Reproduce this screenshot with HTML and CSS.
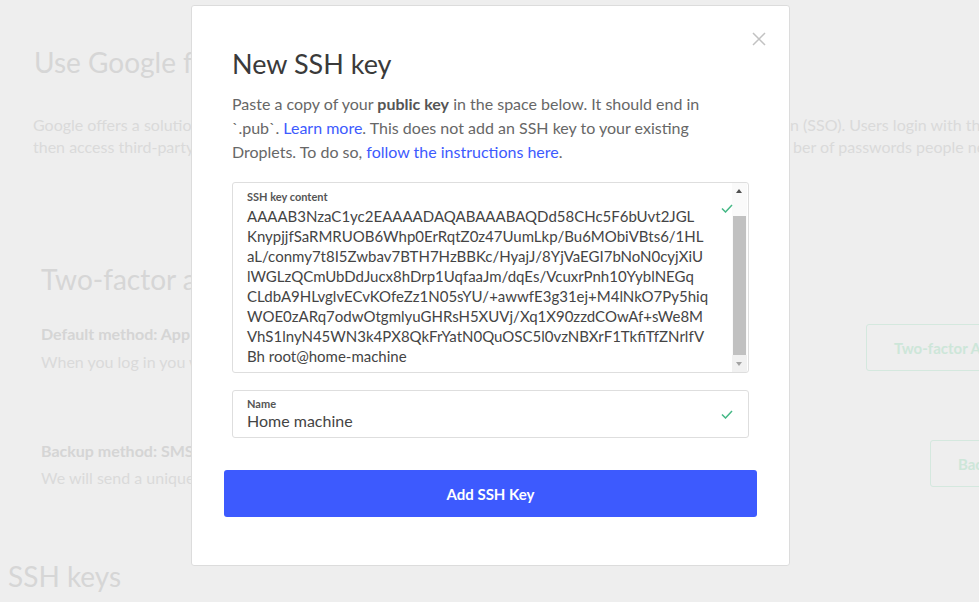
FILE: index.html
```html
<!DOCTYPE html>
<html lang="en">
<head>
<meta charset="utf-8">
<title>Settings – New SSH key</title>
<link rel="stylesheet" href="styles.css">
</head>
<body>
<main class="page">
  <section class="sso">
    <h2 class="page-title">Use Google for single sign-on</h2>
    <p class="sso-text">
      <span class="line line-a"><span>Google offers a solution for single sign-o</span><span>n (SSO). Users login with their Google account</span></span>
      <span class="line line-b"><span>then access third-party applications, reducing the num</span><span>ber of passwords people need to remember.</span></span>
    </p>
  </section>

  <section class="tfa">
    <h2 class="page-title">Two-factor authentication</h2>
    <div class="method">
      <div class="method-info">
        <h3>Default method: App</h3>
        <p>When you log in you will be asked for a code from your authenticator app.</p>
      </div>
      <button class="ghost-btn wide" type="button">Two-factor Authentication</button>
    </div>
    <div class="method">
      <div class="method-info">
        <h3>Backup method: SMS</h3>
        <p class="tight">We will send a unique code to your phone when you need it.</p>
      </div>
      <button class="ghost-btn narrow" type="button">Backup codes</button>
    </div>
  </section>

  <section class="keys">
    <h2 class="page-title">SSH keys</h2>
  </section>
</main>

<div class="overlay">
  <div class="modal" role="dialog" aria-labelledby="modal-title">
    <button class="close" type="button" aria-label="Close">
      <svg viewBox="0 0 14 14" width="14" height="14"><path d="M1 1 L13 13 M13 1 L1 13" stroke="#c2c2c2" stroke-width="1.5" fill="none"/></svg>
    </button>

    <h1 class="modal-title" id="modal-title">New SSH key</h1>
    <p class="intro">Paste a copy of your <strong>public key</strong> in the space below. It should end in<br>`.pub`. <a href="#">Learn more</a>. This does not add an SSH key to your existing<br>Droplets. To do so, <a href="#">follow the instructions here</a>.</p>

    <div class="field field-key">
      <div class="field-body">
        <span class="field-label">SSH key content</span>
        <div class="key-lines">
          <div>AAAAB3NzaC1yc2EAAAADAQABAAABAQDd58CHc5F6bUvt2JGL</div>
          <div>KnypjjfSaRMRUOB6Whp0ErRqtZ0z47UumLkp/Bu6MObiVBts6/1HL</div>
          <div>aL/conmy7t8I5Zwbav7BTH7HzBBKc/HyajJ/8YjVaEGI7bNoN0cyjXiU</div>
          <div>lWGLzQCmUbDdJucx8hDrp1UqfaaJm/dqEs/VcuxrPnh10YyblNEGq</div>
          <div>CLdbA9HLvglvECvKOfeZz1N05sYU/+awwfE3g31ej+M4lNkO7Py5hiq</div>
          <div>WOE0zARq7odwOtgmlyuGHRsH5XUVj/Xq1X90zzdCOwAf+sWe8M</div>
          <div>VhS1lnyN45WN3k4PX8QkFrYatN0QuOSC5l0vzNBXrF1TkfiTfZNrlfV</div>
          <div>Bh root@home-machine</div>
        </div>
      </div>
      <div class="scrollbar" aria-hidden="true">
        <span class="sb-arrow up"></span>
        <span class="sb-gap"></span>
        <span class="sb-thumb"></span>
        <span class="sb-arrow down"></span>
      </div>
      <svg class="check" viewBox="0 0 12 9" width="12" height="9"><polyline points="1,4.5 4.5,8 11,1" fill="none" stroke="#45b886" stroke-width="1.5"/></svg>
    </div>

    <div class="field field-name">
      <span class="field-label">Name</span>
      <div class="field-value">Home machine</div>
      <svg class="check" viewBox="0 0 12 9" width="12" height="9"><polyline points="1,4.5 4.5,8 11,1" fill="none" stroke="#45b886" stroke-width="1.5"/></svg>
    </div>

    <button class="primary" type="button">Add SSH Key</button>
  </div>
</div>
</body>
</html>
```

FILE: styles.css
```css
* {
  box-sizing: border-box;
}

html,
body {
  margin: 0;
  height: 100%;
  overflow: hidden;
}

body {
  background: #eeeeee;
  font-family: "Lato", "Open Sans", sans-serif;
  color: #444444;
}

/* ---------- settings page behind the dialog ---------- */

.page {
  width: 1100px;
}

.page-title {
  margin: 0;
  font-size: 28px;
  line-height: 32px;
  font-weight: 400;
  color: #d6d6d6;
  white-space: nowrap;
}

.sso {
  padding: 46px 0 0 34px;
}

.sso-text {
  margin: 36px 0 0 -1px;
  font-size: 16px;
  line-height: 22px;
  color: #dadada;
}

.line {
  display: grid;
  white-space: nowrap;
}

.line-a {
  grid-template-columns: 757px auto;
}

.line-b {
  grid-template-columns: 760px auto;
}

.line > span {
  overflow: hidden;
}

.tfa {
  padding: 105px 10px 0 41px;
}

.tfa .page-title {
  margin-bottom: 27px;
}

.method {
  display: flex;
  justify-content: space-between;
  align-items: flex-start;
}

.method + .method {
  margin-top: 65px;
}

.method h3 {
  margin: 0;
  font-size: 16px;
  line-height: 24px;
  font-weight: 700;
  color: #d5d5d5;
  white-space: nowrap;
}

.method p {
  margin: 4px 0 0;
  font-size: 16px;
  line-height: 24px;
  color: #dadada;
  white-space: nowrap;
}

.method p.tight {
  margin-top: 3px;
}

.ghost-btn {
  flex: none;
  margin-top: 2px;
  height: 47px;
  padding: 0 0 0 27px;
  border: 1px solid #d4e8de;
  border-radius: 3px;
  background: transparent;
  font-family: inherit;
  font-size: 15px;
  font-weight: 700;
  color: #cde6d9;
  text-align: left;
  white-space: nowrap;
}

.ghost-btn.wide {
  width: 224px;
}

.ghost-btn.narrow {
  width: 160px;
  margin-top: 1px;
}

.keys {
  padding: 70px 0 0 8px;
}

/* ---------- dialog ---------- */

.overlay {
  position: fixed;
  inset: 0;
  display: flex;
  align-items: flex-start;
  padding: 5px 0 0 191px;
}

.modal {
  position: relative;
  width: 599px;
  height: 561px;
  padding: 42px 40px 0;
  background: #ffffff;
  border: 1px solid #dcdcdc;
  border-radius: 3px;
}

.close {
  position: absolute;
  top: 26px;
  right: 23px;
  width: 14px;
  height: 14px;
  padding: 0;
  border: 0;
  background: none;
  line-height: 0;
}

.modal-title {
  margin: 0;
  font-size: 27px;
  line-height: 32px;
  font-weight: 400;
  color: #3a3a3a;
}

.intro {
  margin: 12px 0 0;
  font-size: 16px;
  line-height: 24px;
  color: #676767;
  white-space: nowrap;
}

.intro strong {
  font-weight: 700;
  color: #555555;
}

.intro a {
  color: #3d5afe;
  text-decoration: none;
}

.field {
  position: relative;
  border: 1px solid #dedede;
  border-radius: 3px;
}

.field-label {
  display: block;
  font-size: 11px;
  line-height: 14px;
  font-weight: 700;
  color: #555555;
}

.field-key {
  display: flex;
  height: 191px;
  margin-top: 18px;
}

.field-body {
  flex: 1;
  padding: 7px 0 6px 14px;
  overflow: hidden;
}

.key-lines {
  margin-top: 2px;
  font-size: 15px;
  line-height: 20px;
  color: #444444;
  white-space: nowrap;
}

.scrollbar {
  flex: none;
  display: flex;
  flex-direction: column;
  width: 15px;
  margin-right: 1px;
  background: #fafafa;
}

.sb-arrow {
  position: relative;
  height: 17px;
}

.sb-arrow::after {
  content: "";
  position: absolute;
  left: 4px;
  top: 6px;
  border-left: 3.5px solid transparent;
  border-right: 3.5px solid transparent;
}

.sb-arrow.up::after {
  border-bottom: 4px solid #505050;
}

.sb-arrow.down {
  background: #f1f1f1;
}

.sb-arrow.down::after {
  top: 7px;
  border-top: 4px solid #a3a3a3;
}

.sb-gap {
  height: 16px;
}

.sb-thumb {
  height: 139px;
  margin: 0 1px;
  background: #c1c1c1;
}

.check {
  position: absolute;
  top: 21px;
  right: 15px;
}

.field-name {
  margin-top: 17px;
  padding: 6px 0 6px 14px;
}

.field-name .check {
  top: 19px;
}

.field-value {
  font-size: 16px;
  line-height: 20px;
  color: #444444;
}

.primary {
  display: block;
  width: calc(100% + 16px);
  height: 47px;
  margin: 32px -8px 0;
  border: 0;
  border-radius: 3px;
  background: #3d5afe;
  font-family: inherit;
  font-size: 15px;
  font-weight: 700;
  color: #ffffff;
}
```
